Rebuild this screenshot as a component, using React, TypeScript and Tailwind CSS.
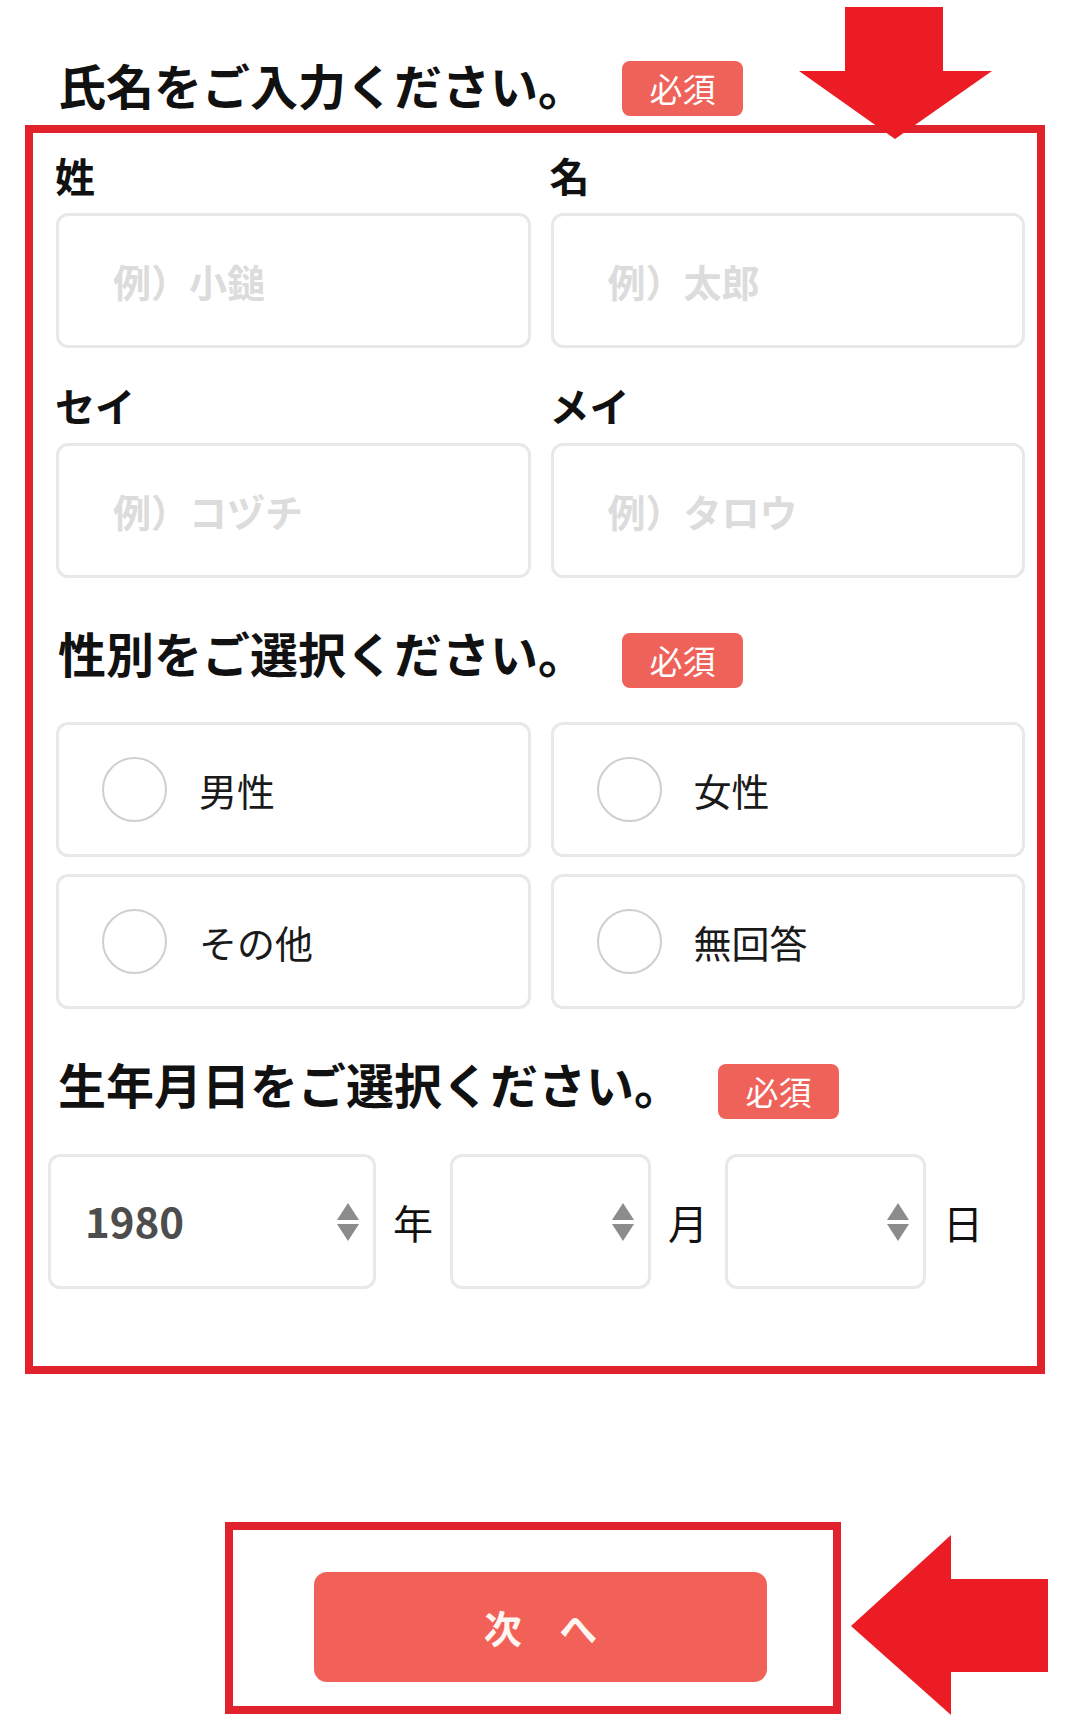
import React from "react";

const FONT = "font-['Noto_Sans_CJK_JP','Noto_Sans',sans-serif]";

function Badge({ className = "" }: { className?: string }) {
  return (
    <span
      className={`ml-[36px] flex h-[55px] w-[121px] shrink-0 items-center justify-center rounded-[8px] bg-[#ef6259] text-[33px] leading-none text-white ${className}`}
    >
      必須
    </span>
  );
}

function SectionTitle({ children, badgeClass = "mt-[5px]" }: { children: React.ReactNode; badgeClass?: string }) {
  return (
    <div className="flex items-start">
      <h2 className="text-[48px] font-bold leading-none text-[#111]">{children}</h2>
      <Badge className={badgeClass} />
    </div>
  );
}

function Field({ label, placeholder }: { label: string; placeholder: string }) {
  return (
    <div>
      <label className="ml-[-1px] block text-[40px] font-bold leading-none text-[#111]">{label}</label>
      <input
        placeholder={placeholder}
        className="mt-[18px] block h-[135px] w-full rounded-[12px] border-[3px] border-[#e8e8e8] bg-white pl-[54px] text-[38px] font-bold text-[#333] outline-none placeholder:text-[#dcdcdc]"
      />
    </div>
  );
}

function Radio({ label }: { label: string }) {
  return (
    <label className="flex h-[135px] items-center rounded-[12px] border-[3px] border-[#e8e8e8] bg-white pl-[43px]">
      <span className="h-[65px] w-[65px] shrink-0 rounded-full border-2 border-[#cfcfcf]" />
      <span className="ml-[32px] text-[38px] leading-none text-[#1a1a1a]">{label}</span>
    </label>
  );
}

function Spinner() {
  return (
    <svg width="22" height="38" viewBox="0 0 22 38" aria-hidden="true">
      <path d="M11 0 L22 17 L0 17 Z" fill="#8c8c8c" />
      <path d="M0 21 L22 21 L11 38 Z" fill="#8c8c8c" />
    </svg>
  );
}

function SelectBox({ value, width }: { value?: string; width: string }) {
  return (
    <div
      className={`flex h-[135px] ${width} shrink-0 items-center justify-between rounded-[12px] border-[3px] border-[#e8e8e8] bg-white pl-[34px] pr-[14px]`}
    >
      <span className="mt-[-4px] text-[42px] font-bold leading-none text-[#4d4d4d]">{value}</span>
      <Spinner />
    </div>
  );
}

export default function App() {
  return (
    <div className={`relative h-[1732px] w-[1080px] overflow-hidden bg-white ${FONT}`}>
      <div className="pl-[58px] pt-[60px]">
        <SectionTitle badgeClass="mt-[1px]">氏名をご入力ください。</SectionTitle>
      </div>

      <section className="ml-[25px] mt-[9px] w-[1020px] border-[8px] border-[#e1222c] pb-[77px]">
        <div className="grid grid-cols-2 gap-x-[20px] gap-y-[37px] pl-[23px] pr-[12px] pt-[22px]">
          <Field label="姓" placeholder="例）小鎚" />
          <Field label="名" placeholder="例）太郎" />
          <Field label="セイ" placeholder="例）コヅチ" />
          <Field label="メイ" placeholder="例）タロウ" />
        </div>

        <div className="mt-[50px] pl-[25px]">
          <SectionTitle>性別をご選択ください。</SectionTitle>
        </div>

        <div className="mt-[34px] grid grid-cols-2 gap-x-[20px] gap-y-[17px] pl-[23px] pr-[12px]">
          <Radio label="男性" />
          <Radio label="女性" />
          <Radio label="その他" />
          <Radio label="無回答" />
        </div>

        <div className="mt-[50px] pl-[25px]">
          <SectionTitle>生年月日をご選択ください。</SectionTitle>
        </div>

        <div className="mt-[35px] flex items-center gap-[17px] pl-[15px] text-[40px] leading-none text-[#111]">
          <SelectBox value="1980" width="w-[328px]" />
          <span>年</span>
          <SelectBox width="w-[201px]" />
          <span>月</span>
          <SelectBox width="w-[201px]" />
          <span>日</span>
        </div>
      </section>

      <div className="ml-[225px] mt-[148px] w-[616px] border-[8px] border-[#e1222c] pb-[24px] pl-[81px] pr-[66px] pt-[42px]">
        <button
          type="button"
          className="flex h-[110px] w-full items-center justify-center rounded-[13px] bg-[#f26157] text-[38px] font-bold leading-none text-[#fff6f2] [word-spacing:29px]"
        >
          次 へ
        </button>
      </div>

      {/* annotation arrows */}
      <svg className="absolute left-[799px] top-[7px]" width="193" height="132" viewBox="0 0 193 132" aria-hidden="true">
        <polygon points="46,0 144,0 144,64 193,64 96,132 0,64 46,64" fill="#ec1c24" />
      </svg>
      <svg className="absolute left-[851px] top-[1535px]" width="197" height="180" viewBox="0 0 197 180" aria-hidden="true">
        <polygon points="0,91 100,0 100,44 197,44 197,137 100,137 100,180" fill="#ec1c24" />
      </svg>
    </div>
  );
}
